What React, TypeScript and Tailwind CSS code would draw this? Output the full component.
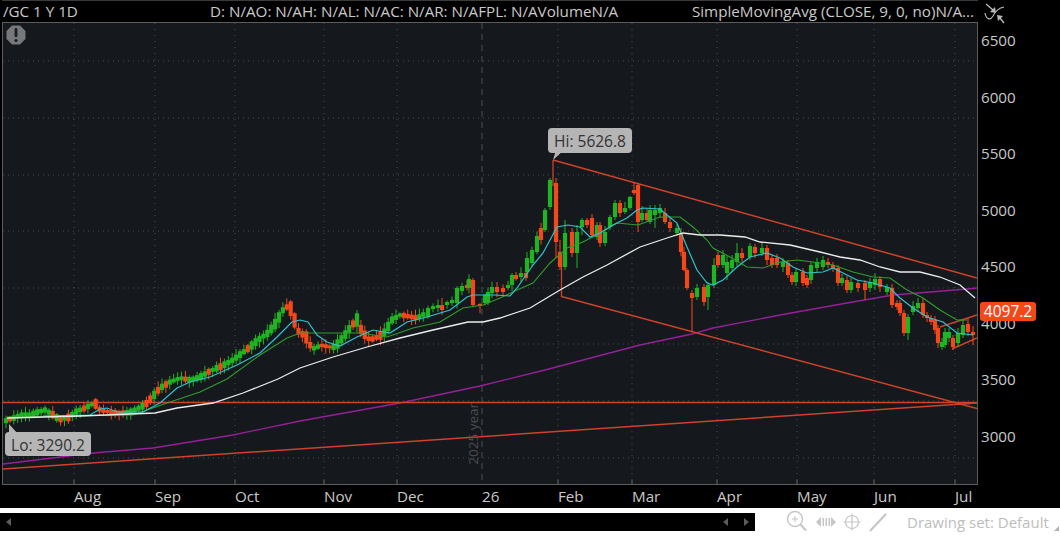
import React from "react";

type Pt = [number, number];
// x, body top, body bottom, colour, optional wick top / bottom
type Candle = [number, number, number, "g" | "r", number?, number?];

const GREEN = "#1fb522";
const RED = "#f4481b";
const LINE_RED = "#d0422a";

const priceLabels = ["6500", "6000", "5500", "5000", "4500", "4000", "3500", "3000"];

// x axis is a grid, month widths come from the tick positions
const months = ["", "Aug", "Sep", "Oct", "Nov", "Dec", "26", "Feb", "Mar", "Apr", "May", "Jun", "Jul"];

const gridX = [74, 155, 235, 324, 397, 558, 632, 717, 797, 874, 955];
const gridY = [61, 118, 175, 231, 288, 344, 401, 458];

const pricePath: Pt[] = [
  [5, 421], [14, 418], [20, 415], [32, 414], [45, 410], [52, 414], [60, 420], [70, 417], [75, 412],
  [85, 408], [95, 403], [100, 410], [110, 412], [125, 413], [135, 410], [145, 405], [155, 394],
  [160, 388], [170, 382], [180, 378], [190, 380], [200, 377], [210, 371], [222, 366], [233, 360],
  [250, 347], [258, 340], [268, 333], [276, 323], [283, 310], [288, 306], [292, 310], [297, 330],
  [307, 338], [310, 345], [315, 349], [320, 345], [330, 347], [335, 347], [345, 335], [352, 325],
  [357, 320], [362, 332], [370, 340], [380, 336], [385, 332], [392, 320], [400, 315], [407, 316],
  [417, 318], [426, 313],
];

const tracedCandles: Candle[] = [
  [428, 308, 317, "g"], [433, 306, 309, "g"], [438, 305, 308, "g"], [442, 305, 310, "r", 298, 315],
  [447, 302, 305, "g"], [452, 300, 303, "g"], [457, 288, 303, "g"], [462, 286, 291, "g"],
  [467, 285, 288, "r"], [469, 279, 288, "g"], [473, 280, 305, "r", 278, 307], [480, 304, 306, "r", 303, 313],
  [485, 295, 303, "g"], [488, 292, 303, "g"], [492, 287, 293, "g"], [497, 287, 292, "r"],
  [503, 288, 292, "r"], [508, 285, 288, "g"], [512, 275, 285, "g"], [516, 275, 279, "r"],
  [521, 273, 277, "g"], [526, 273, 278, "r"], [527, 258, 272, "g"], [532, 250, 263, "g"],
  [537, 236, 252, "g"], [541, 228, 240, "r"], [545, 210, 230, "g", 208, 232], [550, 180, 207, "g", 178, 210],
  [556, 183, 242, "r", 178, 258], [560, 252, 267, "r", 240, 270], [565, 233, 267, "g", 220, 270],
  [572, 232, 253, "r", 228, 257], [577, 232, 253, "g", 225, 268], [582, 220, 227, "g", 218, 235],
  [587, 220, 225, "r", 218, 228], [592, 218, 235, "r", 214, 238], [597, 225, 237, "g", 222, 240],
  [600, 225, 243, "r", 222, 247], [605, 232, 243, "g", 226, 246], [610, 217, 227, "g", 215, 230],
  [615, 203, 217, "g", 200, 220], [620, 203, 213, "r", 200, 217], [625, 208, 212, "g", 202, 214],
  [630, 197, 208, "g", 196, 210], [634, 190, 193, "r", 182, 195], [638, 185, 222, "r", 183, 232],
  [642, 213, 220, "g", 206, 222], [647, 213, 220, "r", 208, 222], [650, 210, 222, "g", 205, 224],
  [655, 210, 215, "g", 205, 228], [660, 208, 213, "g", 204, 218], [665, 213, 222, "r", 208, 224],
  [670, 222, 228, "r", 218, 232], [677, 228, 233, "g", 224, 236], [681, 233, 252, "r"],
  [684, 252, 270, "r"], [687, 270, 288, "r", 268, 290], [692, 293, 298, "r", 290, 332],
  [697, 288, 297, "g", 284, 300], [704, 287, 302, "r", 284, 306], [708, 285, 297, "g", 282, 310],
  [714, 265, 285, "g", 258, 288], [718, 255, 265, "r", 252, 268], [723, 255, 265, "g", 250, 268],
  [727, 262, 273, "g", 256, 280], [732, 260, 268, "g", 255, 272], [737, 253, 262, "g", 243, 266],
  [742, 253, 258, "r", 248, 262], [750, 246, 257, "g", 243, 260], [755, 247, 253, "r", 244, 258],
  [762, 248, 253, "g", 242, 256], [767, 248, 260, "r", 245, 265], [772, 258, 265, "r", 255, 268],
  [777, 258, 265, "r", 254, 268], [783, 262, 267, "g", 258, 272], [788, 263, 275, "r", 260, 278],
  [792, 275, 282, "r", 272, 285], [796, 272, 282, "g", 268, 286], [803, 272, 283, "r", 268, 286],
  [807, 278, 285, "r", 275, 288], [811, 265, 280, "g", 262, 284], [817, 262, 268, "g", 258, 272],
  [823, 260, 267, "g", 256, 270], [828, 262, 265, "r", 258, 268], [833, 265, 268, "r", 262, 272],
  [838, 268, 283, "r", 265, 286], [842, 278, 283, "g", 274, 286], [847, 280, 290, "r", 276, 293],
  [851, 282, 290, "g", 278, 293], [858, 283, 288, "r", 280, 292], [865, 283, 290, "r", 280, 300],
  [870, 282, 288, "g", 278, 292], [875, 279, 285, "g", 273, 290], [880, 279, 287, "r", 276, 292],
  [887, 287, 292, "g", 284, 295], [892, 288, 305, "r", 284, 308], [897, 303, 307, "r", 300, 310],
  [900, 303, 313, "r", 300, 316], [904, 313, 333, "r", 310, 336], [908, 317, 333, "g", 314, 340],
  [913, 306, 312, "g", 301, 315], [918, 303, 308, "g", 298, 312], [923, 303, 315, "r", 298, 318],
  [927, 315, 318, "r", 312, 322], [931, 318, 322, "r", 315, 325], [935, 320, 330, "r", 316, 334],
  [938, 328, 343, "r", 325, 348], [942, 342, 347, "g", 338, 350], [945, 332, 345, "g", 328, 348],
  [949, 332, 338, "g", 328, 342], [953, 338, 347, "r", 335, 350], [958, 333, 343, "g", 328, 347],
  [963, 325, 335, "g", 320, 338], [968, 324, 332, "r", 318, 336], [973, 332, 335, "r", 326, 345],
];

const cyanLine: Pt[] = [
  [43, 416], [90, 415], [100, 409], [107, 408], [117, 412], [143, 412], [160, 403], [177, 388], [190, 382],
  [210, 377], [237, 365], [260, 353], [277, 337], [292, 322], [300, 320], [308, 322], [317, 335], [327, 342],
  [340, 346], [357, 337], [373, 330], [390, 333], [407, 322], [427, 317], [450, 310], [467, 297], [473, 295],
  [495, 295], [510, 296], [517, 288], [533, 265], [543, 253], [557, 227], [568, 225], [580, 227], [590, 237],
  [600, 233], [613, 225], [627, 218], [637, 210], [643, 208], [660, 209], [667, 215], [677, 223], [687, 247],
  [697, 270], [707, 283], [713, 285], [723, 280], [737, 267], [750, 257], [767, 253], [780, 258], [793, 267],
  [807, 273], [823, 272], [833, 268], [843, 273], [857, 280], [873, 283], [890, 288], [900, 298], [913, 308],
  [927, 317], [943, 322], [957, 333], [973, 335],
];

const greenLine: Pt[] = [
  [7, 417], [60, 416], [133, 415], [167, 403], [200, 392], [227, 379], [260, 355], [287, 338], [300, 333],
  [320, 333], [360, 333], [387, 337], [413, 328], [440, 322], [463, 308], [483, 305], [500, 298], [517, 290],
  [533, 283], [550, 263], [567, 248], [583, 242], [600, 233], [617, 223], [638, 225], [660, 217], [680, 217],
  [693, 227], [707, 240], [713, 248], [730, 257], [747, 267], [763, 268], [780, 262], [797, 260], [813, 262],
  [833, 265], [853, 272], [873, 277], [890, 278], [907, 290], [923, 298], [940, 310], [957, 320], [967, 320],
];

const whiteLine: Pt[] = [
  [7, 418], [80, 416], [155, 413], [177, 408], [213, 403], [243, 393], [278, 379], [300, 368], [333, 357],
  [367, 347], [400, 338], [433, 330], [468, 322], [483, 322], [500, 318], [530, 308], [560, 290], [583, 277],
  [607, 265], [640, 247], [667, 238], [683, 233], [700, 235], [720, 235], [745, 237], [760, 242], [790, 245],
  [820, 252], [840, 257], [860, 260], [880, 267], [900, 272], [920, 272], [940, 277], [960, 285], [975, 298],
];

const purpleLine: Pt[] = [
  [3, 464], [93, 453], [153, 448], [233, 435], [300, 421], [400, 403], [480, 386], [545, 370], [640, 345],
  [692, 334], [713, 328], [780, 315], [847, 303], [893, 295], [930, 292], [967, 289], [977, 288],
];

const toPoints = (pts: Pt[]) => pts.map((p) => p.join(",")).join(" ");

const yAt = (pts: Pt[], x: number) => {
  for (let i = 1; i < pts.length; i++) {
    if (x <= pts[i][0]) {
      const [x0, y0] = pts[i - 1];
      const [x1, y1] = pts[i];
      return y0 + ((y1 - y0) * (x - x0)) / (x1 - x0);
    }
  }
  return pts[pts.length - 1][1];
};

const noise = (i: number) => {
  const v = Math.sin(i * 12.9898) * 43758.5453;
  return v - Math.floor(v);
};

// the older part of the chart follows the price path
const pathCandles: Candle[] = [];
for (let i = 0; i < 108; i++) {
  const x = 6 + i * 3.9;
  const y = yAt(pricePath, x);
  const next = yAt(pricePath, x + 3.9);
  const rising = next < y;
  const flip = noise(i) > 0.75;
  const up = flip ? !rising : rising;
  const size = Math.abs(next - y) + 2 + noise(i + 200) * 3;
  pathCandles.push([x, y - size / 2, y + size / 2, up ? "g" : "r"]);
}

const candles = [...pathCandles, ...tracedCandles];

const CandleMark = ({ c, i }: { c: Candle; i: number }) => {
  const [x, top, bottom, kind, wickTop, wickBottom] = c;
  const color = kind === "g" ? GREEN : RED;
  const hi = wickTop ?? top - 1 - noise(i + 50) * 5;
  const lo = wickBottom ?? bottom + 1 + noise(i + 90) * 5;
  return (
    <g>
      <line x1={x} x2={x} y1={hi} y2={lo} stroke={color} strokeWidth={1} />
      <rect x={x - 2.1} y={top} width={4.2} height={Math.max(bottom - top, 2)} fill={color} />
    </g>
  );
};

const Chart = () => (
  <svg viewBox="3 23 974 461" className="absolute inset-0 w-full h-full">
    {gridX.map((x) => (
      <line key={x} x1={x} x2={x} y1={23} y2={484} stroke="#4a4d50" strokeDasharray="1 5" />
    ))}
    {gridY.map((y) => (
      <line key={y} x1={3} x2={977} y1={y} y2={y} stroke="#4a4d50" strokeDasharray="1 4" />
    ))}
    <line x1={482} x2={482} y1={23} y2={484} stroke="#4d5054" strokeDasharray="6 5" />
    {gridX.map((x) => (
      <line key={x} x1={x} x2={x} y1={480} y2={484} stroke="#6a6a6a" />
    ))}

    <polyline points={toPoints(purpleLine)} fill="none" stroke="#96209a" strokeWidth={1.3} />
    <line x1={3} x2={977} y1={402.5} y2={402.5} stroke={LINE_RED} strokeWidth={1.5} />
    <line x1={3} x2={977} y1={469} y2={403} stroke={LINE_RED} strokeWidth={1.5} />
    <line x1={553} x2={977} y1={160} y2={278} stroke={LINE_RED} strokeWidth={1.5} />
    <line x1={561.5} x2={977} y1={296.5} y2={408.5} stroke={LINE_RED} strokeWidth={1.5} />
    <line x1={553} x2={553} y1={160} y2={186} stroke={LINE_RED} strokeWidth={1.3} />
    <line x1={561.5} x2={561.5} y1={252} y2={297} stroke={LINE_RED} strokeWidth={1.3} />
    <line x1={940} x2={977} y1={327} y2={315} stroke={LINE_RED} strokeWidth={1.5} />
    <line x1={952} x2={977} y1={349} y2={338} stroke={LINE_RED} strokeWidth={1.5} />

    {candles.map((c, i) => (
      <CandleMark key={i} c={c} i={i} />
    ))}

    <polyline points={toPoints(greenLine)} fill="none" stroke="#2f9e2c" strokeWidth={1.1} />
    <polyline points={toPoints(cyanLine)} fill="none" stroke="#2fc3d0" strokeWidth={1.2} />
    <polyline points={toPoints(whiteLine)} fill="none" stroke="#ececec" strokeWidth={1.3} />

    <polygon points="553,160 556,150 564,150" fill="#b5b5b5" />
    <polygon points="9,424 9,434 18,434" fill="#b5b5b5" />

    {/* warning badge */}
    <polygon points="12,25.5 20,25.5 25.5,31 25.5,39 20,44.5 12,44.5 6.5,39 6.5,31" fill="#76787b" />
    <rect x={14.6} y={28} width={2.8} height={9} rx={1} fill="#1a1c20" />
    <circle cx={16} cy={40.5} r={1.6} fill="#1a1c20" />
  </svg>
);

const CompareIcon = () => (
  <svg width="22" height="22" viewBox="0 0 22 22" fill="none">
    <path d="M2 1 L9 7" stroke="#b8b8b8" strokeWidth="1.4" />
    <path d="M12 10 L6 9 L11 4 Z" fill="#b8b8b8" />
    <path d="M1 10 C2 16 6 18 9 13 C11 9 14 5 20 4" stroke="#b8b8b8" strokeWidth="1.2" />
    <path d="M13 12 L19 13 L14 18 Z" fill="#b8b8b8" />
    <path d="M16 15 L20 20" stroke="#b8b8b8" strokeWidth="1.4" />
  </svg>
);

const ZoomIcon = () => (
  <svg width="24" height="24" viewBox="0 0 24 24" fill="none" stroke="#c6c6c6" strokeWidth="1.4">
    <circle cx="10" cy="9" r="7.5" />
    <path d="M7 9 H13 M10 6 V12" strokeWidth="1.1" />
    <path d="M15.5 14.5 L21 20.5" strokeWidth="2" />
  </svg>
);

const PanIcon = () => (
  <svg width="20" height="14" viewBox="0 0 20 14" fill="#c6c6c6">
    <polygon points="0,7 5,2 5,12" />
    <rect x="6.5" y="3" width="1.5" height="8" />
    <rect x="9.5" y="3" width="1.5" height="8" />
    <rect x="12.5" y="3" width="1.5" height="8" />
    <polygon points="20,7 15,2 15,12" />
  </svg>
);

const CrosshairIcon = () => (
  <svg width="18" height="18" viewBox="0 0 18 18" fill="none" stroke="#c6c6c6" strokeWidth="1.2">
    <circle cx="9" cy="9" r="6.5" />
    <path d="M9 0.5 V17.5 M0.5 9 H17.5" />
  </svg>
);

const LineIcon = () => (
  <svg width="20" height="20" viewBox="0 0 20 20" fill="none" stroke="#c6c6c6" strokeWidth="2.2">
    <path d="M2 19 L18 2" />
  </svg>
);

export default function App() {
  return (
    <div
      className="w-[1060px] h-[536px] bg-white flex flex-col overflow-hidden"
      style={{ fontFamily: '"Open Sans", "Noto Sans", sans-serif' }}
    >
      <div className="h-[508px] shrink-0 bg-black flex">
        <div className="w-[978px] pl-[2px] flex flex-col">
          <div className="h-[22px] shrink-0 border-t border-[#3a3a3a] flex items-center text-[15.2px] leading-none text-[#c9c9c9] whitespace-nowrap">
            <span className="w-[208px] pl-[1px]">/GC 1 Y 1D</span>
            <span>D: N/AO: N/AH: N/AL: N/AC: N/AR: N/AFPL: N/AVolumeN/A</span>
            <span className="ml-auto pr-[4px]">SimpleMovingAvg (CLOSE, 9, 0, no)N/A...</span>
          </div>
          <div className="relative h-[463px] shrink-0 bg-[#15181c] border border-[#5c5c5c]">
            <Chart />
            <div className="absolute left-[545px] top-[105px] w-[84px] h-[25px] rounded bg-[#b5b5b5] text-[#333333] text-[15.5px] leading-[27px] text-center whitespace-nowrap">
              Hi: 5626.8
            </div>
            <div className="absolute left-[2px] top-[409px] w-[86px] h-[24px] rounded bg-[#b5b5b5] text-[#333333] text-[15.5px] leading-[26px] text-center whitespace-nowrap">
              Lo: 3290.2
            </div>
            <div className="absolute left-[461px] top-[382px] h-[58px] w-[20px] flex items-center justify-center">
              <span className="-rotate-90 whitespace-nowrap text-[13.5px] leading-none text-[#4c4f53]">2025 year</span>
            </div>
          </div>
          <div className="grid grid-cols-[72px_81px_80px_89px_73px_85px_76px_74px_85px_80px_77px_81px_1fr] text-[15.2px] leading-none text-[#c9c9c9] pt-[4px]">
            {months.map((m, i) => (
              <span key={i}>{m}</span>
            ))}
          </div>
        </div>
        <div className="relative flex-1 flex flex-col pl-[3px]">
          <div className="h-[28px] pl-[3px] pt-[3px]">
            <CompareIcon />
          </div>
          <div className="flex flex-col text-[15.2px] text-[#c9c9c9]">
            {priceLabels.map((p) => (
              <span key={p} className="h-[56.5px] leading-[24px]">
                {p}
              </span>
            ))}
          </div>
          <div className="absolute left-[2px] top-[302px] w-[56px] h-[19px] rounded-[3px] bg-[#f4481b] text-white text-[15.5px] leading-[19px] text-center">
            4097.2
          </div>
        </div>
      </div>
      <div className="flex-1 flex">
        <div className="mt-[5px] w-[755px] shrink-0 h-[18px] bg-black flex items-center justify-between pl-[6px] pr-[6px] text-[#5c5c5c]">
          <svg width="5" height="8" viewBox="0 0 5 8" fill="currentColor">
            <polygon points="0,4 5,0 5,8" />
          </svg>
          <div className="flex gap-[16px]">
            <svg width="5" height="8" viewBox="0 0 5 8" fill="currentColor">
              <polygon points="0,4 5,0 5,8" />
            </svg>
            <svg width="5" height="8" viewBox="0 0 5 8" fill="currentColor">
              <polygon points="5,4 0,0 0,8" />
            </svg>
          </div>
        </div>
        <div className="flex-1 flex items-center pl-[30px] gap-[7px] relative">
          <ZoomIcon />
          <PanIcon />
          <CrosshairIcon />
          <LineIcon />
          <span className="ml-[12px] text-[15px] text-[#bdbdbd] whitespace-nowrap">Drawing set: Default</span>
          <svg width="5" height="5" viewBox="0 0 5 5" className="absolute right-[1px] bottom-[5px]" fill="#b0b0b0">
            <polygon points="5,0 5,5 0,5" />
          </svg>
        </div>
      </div>
    </div>
  );
}
